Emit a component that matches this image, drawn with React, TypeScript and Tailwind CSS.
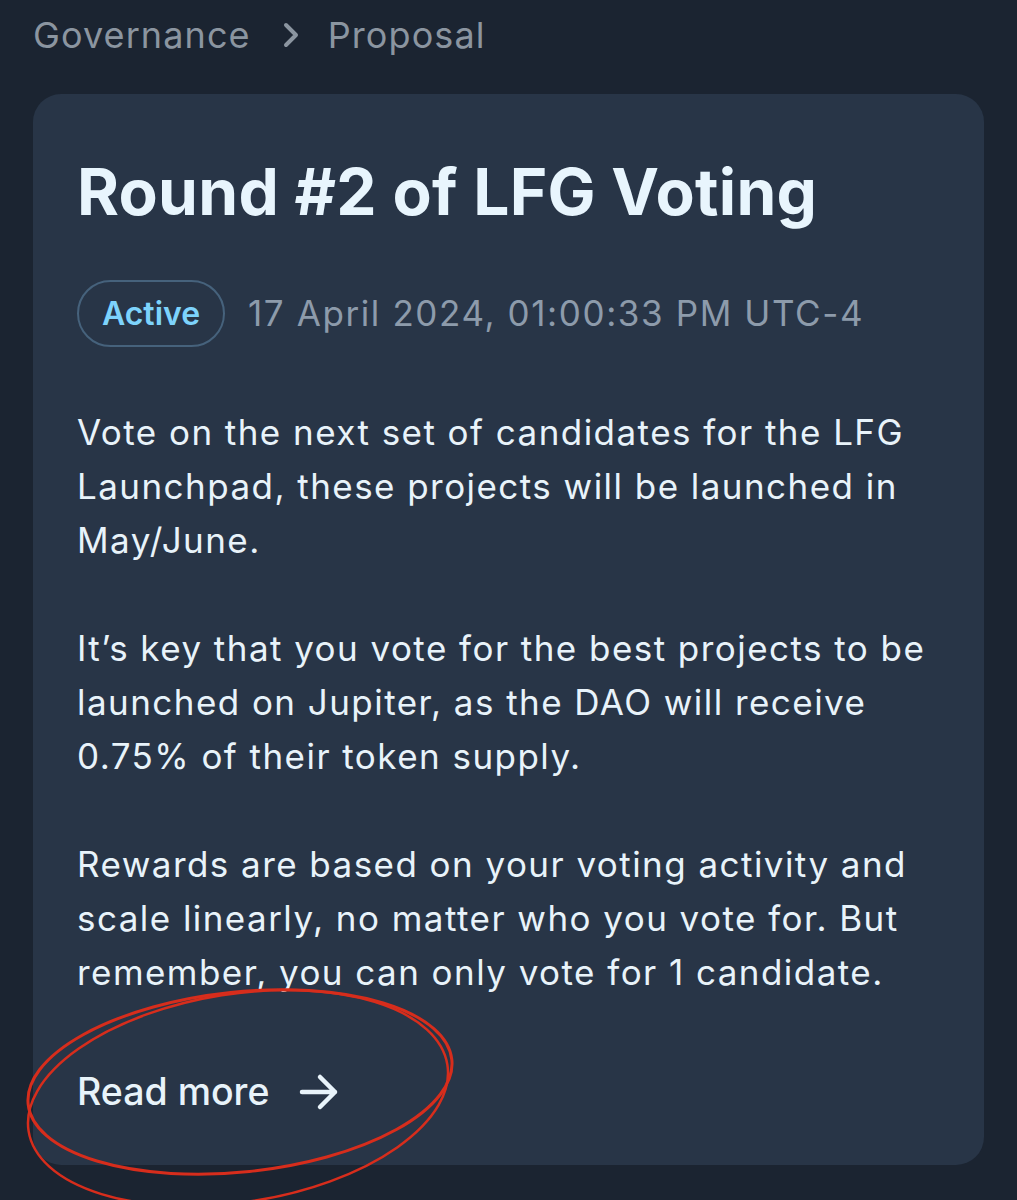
import React from 'react';

export default function App() {
  return (
    <div
      className="relative min-h-[1200px] bg-[#1b2431] pt-[13px] overflow-hidden"
      style={{ fontFamily: 'Inter, "Noto Sans", sans-serif' }}
    >
      {/* breadcrumb */}
      <nav className="flex items-center px-[33px] text-[36px] leading-[44px] tracking-[1.1px] text-[#8b95a0]">
        <span>Governance</span>
        <svg className="ml-[32px] mr-[29px]" width="16" height="26" viewBox="0 0 16 26" fill="none">
          <path d="M3 3l10 10-10 10" stroke="#8b95a0" strokeWidth="4" strokeLinecap="round" strokeLinejoin="round" />
        </svg>
        <span>Proposal</span>
      </nav>

      {/* card */}
      <section className="mx-[33px] mt-[37px] rounded-[28px] bg-[#283547] px-[44px] pt-[60px] pb-[51px]">
        <h1 className="text-[64px] leading-[76px] font-bold text-[#e8f5fd] tracking-[0.3px]">
          Round #2 of LFG Voting
        </h1>

        <div className="mt-[50px] flex items-center">
          <span className="flex h-[67px] w-[148px] items-center justify-center rounded-full border-2 border-[#46627c] text-[32px] font-semibold text-[#7dd3fc]">
            Active
          </span>
          <span className="ml-[23px] text-[35px] tracking-[1.6px] text-[#8d9bab]">17 April 2024, 01:00:33 PM UTC-4</span>
        </div>

        <div className="mt-[58px] text-[35px] leading-[54px] tracking-[1.45px] text-[#e8f3fa]">
          <p>Vote on the next set of candidates for the LFG Launchpad, these projects will be launched in May/June.</p>
          <p className="mt-[54px]">
            It’s key that you vote for the best projects to be launched on Jupiter, as the DAO will receive 0.75% of
            their token supply.
          </p>
          <p className="mt-[54px]">
            Rewards are based on your voting activity and scale linearly, no matter who you vote for. But remember,
            you can only vote for 1 candidate.
          </p>
        </div>

        <button className="mt-[71px] flex items-center gap-[30px] text-[37.5px] leading-[44px] font-medium text-[#e8f3fa]">
          Read more
          <svg width="40" height="40" viewBox="0 0 40 40" fill="none">
            <path d="M3 20h33M21 5l15 15-15 15" stroke="#e8f3fa" strokeWidth="4.5" strokeLinecap="round" strokeLinejoin="round" />
          </svg>
        </button>
      </section>

      {/* red hand-drawn circle annotation */}
      <svg className="pointer-events-none absolute left-0 top-0" width="1017" height="1200" viewBox="0 0 1017 1200" fill="none">
        <ellipse cx="240" cy="1082" rx="213" ry="90" transform="rotate(-6 240 1082)" stroke="#d72d1c" strokeWidth="3" />
        <ellipse cx="238" cy="1098" rx="212" ry="104" transform="rotate(-9 238 1098)" stroke="#d72d1c" strokeWidth="2.5" />
      </svg>
    </div>
  );
}
